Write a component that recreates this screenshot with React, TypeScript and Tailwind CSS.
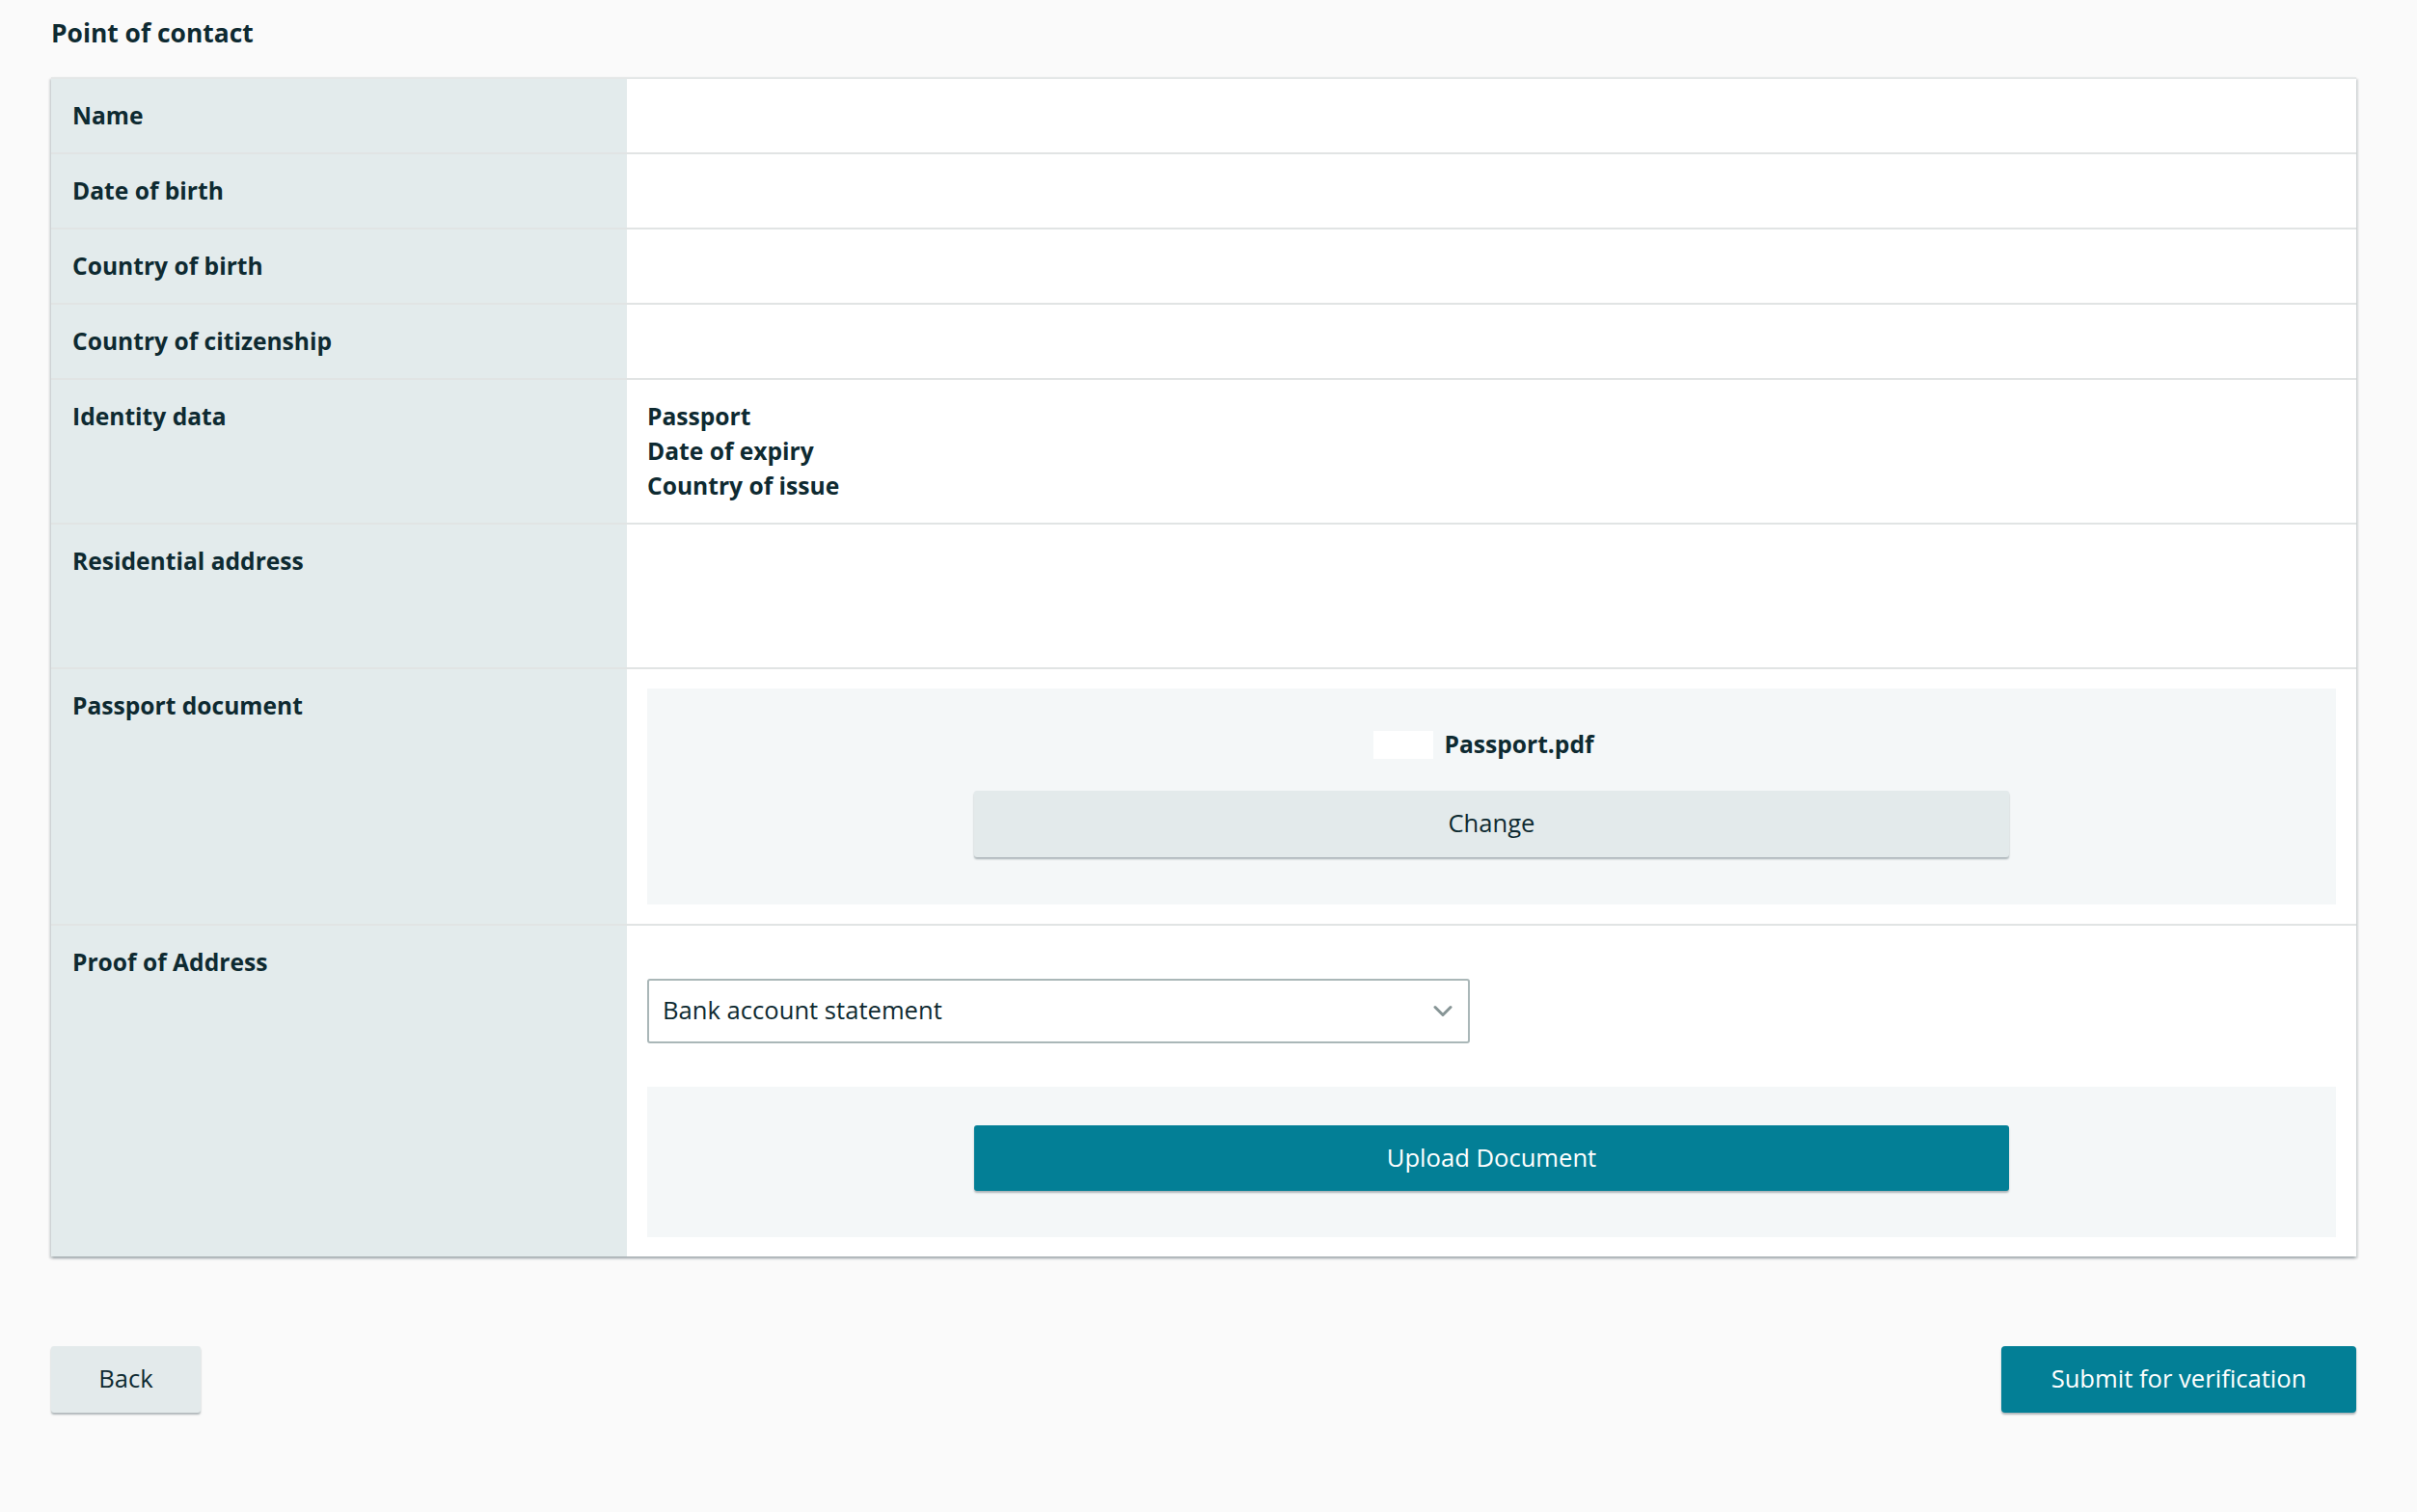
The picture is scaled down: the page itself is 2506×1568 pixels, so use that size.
import React from "react";

const labelCls =
  "bg-[#e3ebec] px-[22px] py-[20px] text-[24.6px] leading-[36px] font-bold";
const valueCls = "px-[21px] py-[20px]";

function Row({
  label,
  children,
  last,
}: {
  label: string;
  children?: React.ReactNode;
  last?: boolean;
}) {
  return (
    <div
      className={`grid grid-cols-[597px_1fr] ${
        last ? "" : "border-b-2 border-[#e1e4e4]"
      }`}
    >
      <div className={labelCls}>{label}</div>
      <div className={valueCls}>{children ?? <div className="h-[36px]" />}</div>
    </div>
  );
}

function Chevron() {
  return (
    <svg width="20" height="13" viewBox="0 0 20 13" fill="none">
      <path
        d="M2 2.5 L10 10.5 L18 2.5"
        stroke="#879596"
        strokeWidth="3"
        strokeLinecap="round"
        strokeLinejoin="round"
      />
    </svg>
  );
}

export default function App() {
  return (
    <div className="min-h-screen bg-[#fafafa] font-['Open_Sans',sans-serif] text-[#0e2a31]">
      <div className="ml-[53px] w-[2390px] pt-[16px] pb-[60px]">
        <h1 className="mb-[28px] text-[26.4px] leading-[36px] font-bold">
          Point of contact
        </h1>

        <div className="border-t-2 border-[#e4e7e7] bg-white shadow-[0_2px_3px_0_rgba(0,28,36,0.22),2px_2px_2px_0_rgba(0,28,36,0.1),-2px_2px_2px_0_rgba(0,28,36,0.1)]">
          <Row label="Name" />
          <Row label="Date of birth" />
          <Row label="Country of birth" />
          <Row label="Country of citizenship" />
          <Row label="Identity data">
            <div className="text-[24.6px] leading-[36px] font-bold">
              <div>Passport</div>
              <div>Date of expiry</div>
              <div>Country of issue</div>
            </div>
          </Row>
          <Row label="Residential address">
            <div className="h-[108px]" />
          </Row>
          <Row label="Passport document">
            <div className="flex flex-col items-center bg-[#f4f7f8] pt-[40px] pb-[49px]">
              <div className="flex items-center pr-[16px] text-[24.6px] leading-[36px] font-bold">
                <span className="mr-[11px] h-[29px] w-[62px] bg-white" />
                Passport.pdf
              </div>
              <button className="mt-[30px] h-[69px] w-[1073px] rounded-[3px] bg-[#e3eaeb] text-[25.6px] shadow-[0_2px_2px_0_rgba(0,28,36,0.3)]">
                Change
              </button>
            </div>
          </Row>
          <Row label="Proof of Address" last>
            <div className="mt-[35px] flex h-[67px] w-[853px] items-center justify-between rounded-[3px] border-2 border-[#aab7b8] bg-white pl-[14px] pr-[16px] text-[25.6px]">
              <span>Bank account statement</span>
              <Chevron />
            </div>
            <div className="mt-[45px] flex justify-center bg-[#f4f7f8] pt-[40px] pb-[48px]">
              <button className="h-[68px] w-[1073px] rounded-[3px] bg-[#037f96] text-[25.6px] text-white shadow-[0_2px_2px_0_rgba(0,28,36,0.3)]">
                Upload Document
              </button>
            </div>
          </Row>
        </div>

        <div className="mt-[93px] flex justify-between">
          <button className="h-[69px] w-[155px] rounded-[3px] bg-[#e3eaeb] text-[25.6px] shadow-[0_2px_2px_0_rgba(0,28,36,0.3)]">
            Back
          </button>
          <button className="h-[69px] w-[368px] rounded-[4px] bg-[#037f96] text-[25.6px] font-medium text-white shadow-[0_2px_2px_0_rgba(0,28,36,0.3)]">
            Submit for verification
          </button>
        </div>
      </div>
    </div>
  );
}
